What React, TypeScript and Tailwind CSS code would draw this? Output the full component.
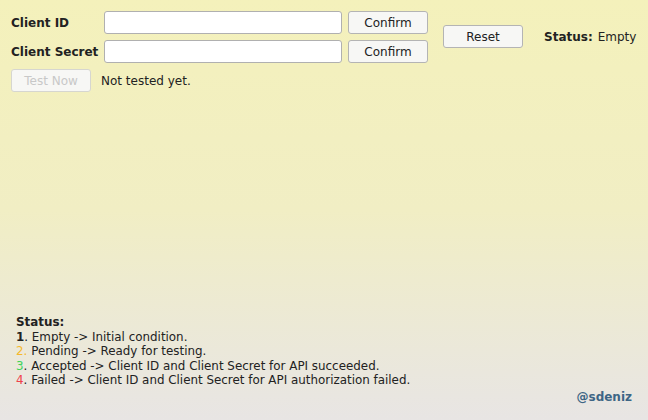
import React from 'react';

const btn =
  'h-[23px] w-[80px] rounded-[3px] border border-[#b4b4b4] bg-[#f7f7f5] text-[12px] text-[#222] leading-none';

export default function App() {
  return (
    <div
      className="relative w-[648px] h-[420px] overflow-hidden bg-gradient-to-b from-[#f4f1bb] via-[#f1eec4] to-[#e8e5e4] text-[#222]"
      style={{ fontFamily: '"DejaVu Sans", sans-serif' }}
    >
      <div className="flex items-start pt-[11px] pl-[11px]">
        <div className="flex flex-col gap-[6px]">
          <div className="flex items-center">
            <span className="w-[93px] whitespace-nowrap text-[12px] font-bold">Client ID</span>
            <input className="h-[23px] w-[238px] rounded-[3px] border border-[#b0b0b0] bg-white" />
            <button className={btn + ' ml-[6px]'}>Confirm</button>
          </div>
          <div className="flex items-center">
            <span className="w-[93px] whitespace-nowrap text-[12px] font-bold">Client Secret</span>
            <input className="h-[23px] w-[238px] rounded-[3px] border border-[#b0b0b0] bg-white" />
            <button className={btn + ' ml-[6px]'}>Confirm</button>
          </div>
          <div className="flex items-center">
            <button disabled className={btn + ' text-[#c8c8c8] border-[#d6d6d0] bg-[#f6f4e4]'}>
              Test Now
            </button>
            <span className="ml-[10px] text-[12px]">Not tested yet.</span>
          </div>
        </div>
        <div className="ml-[15px] mt-[14px] flex items-center">
          <button className={btn}>Reset</button>
          <span className="ml-[21px] text-[12px] font-bold">Status:</span>
          <span className="ml-[5px] text-[12px]">Empty</span>
        </div>
      </div>

      <div className="absolute left-[16px] top-[315px] text-[11.9px] leading-[14.6px]">
        <div className="font-bold">Status:</div>
        <div>
          <span className="font-bold">1</span>. Empty -&gt; Initial condition.
        </div>
        <div>
          <span className="text-[#f5b82a]">2.</span> Pending -&gt; Ready for testing.
        </div>
        <div>
          <span className="text-[#3fd45a]">3</span>. Accepted -&gt; Client ID and Client Secret for API succeeded.
        </div>
        <div>
          <span className="text-[#f0404a]">4</span>. Failed -&gt; Client ID and Client Secret for API authorization failed.
        </div>
      </div>

      <div className="absolute right-[16px] top-[388px] text-[12px] font-bold text-[#3d6585]">@sdeniz</div>
    </div>
  );
}
